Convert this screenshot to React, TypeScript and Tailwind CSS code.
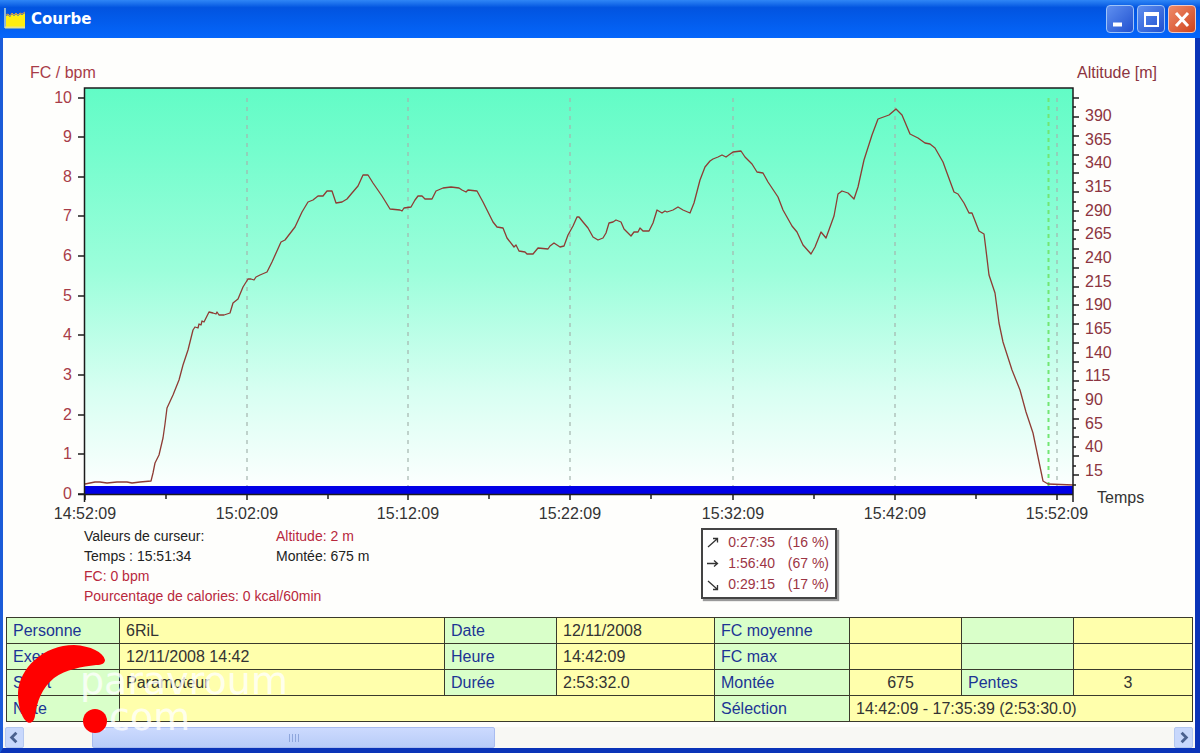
import React from 'react';

const FONT = "font-['Liberation_Sans',Arial,sans-serif]";

// Plot area in drawing units
const PLOT = { left: 85, right: 1073, top: 88, bottom: 494 };

const CURVE =
  '85,484 95,482 100,482 107,483 117,482 127,482 132,483 140,482 151,481 153,473 155,463 159,455 163,438 165,424 167,408 173,395 179,380 183,365 188,350 191,338 193,330 195,327 198,328 199,324 201,325 202,321 204,322 209,312 213,313 216,314 217,312 219,315 224,315 230,313 233,303 238,299 243,287 248,279 251,279 254,280 256,277 260,275 267,272 272,262 281,242 285,240 295,227 302,212 308,202 313,200 318,196 323,196 327,191 332,191 336,203 342,202 347,199 352,193 358,186 363,175 368,175 373,183 382,196 390,209 400,210 402,211 404,208 411,207 415,200 418,196 422,196 425,199 432,199 436,191 443,188 451,187 459,188 462,190 466,192 468,190 477,191 483,202 493,222 497,227 503,228 507,238 514,247 516,245 519,251 525,252 527,254 533,254 538,248 548,249 550,246 554,243 560,247 564,246 568,235 573,226 577,217 579,217 583,222 588,228 593,237 598,240 603,238 606,233 609,223 613,222 616,220 621,222 624,229 631,236 634,232 638,232 640,228 643,231 649,231 653,223 657,210 662,213 665,211 667,212 673,210 678,207 683,210 690,213 694,203 700,180 705,167 710,161 713,159 718,157 722,155 726,157 733,152 741,151 745,157 752,164 757,172 763,173 768,182 778,197 783,210 792,226 797,232 803,245 811,254 815,247 821,232 826,238 834,216 838,194 842,191 848,193 854,199 858,187 864,160 872,135 878,119 889,115 896,109 902,115 910,134 918,138 925,143 930,144 935,148 943,162 947,173 954,192 958,194 964,203 969,213 972,213 979,231 984,234 986,250 989,275 995,293 999,323 1003,342 1012,370 1020,390 1026,412 1033,433 1038,457 1043,481 1048,484 1073,485';

const timeTicks = [
  { x: 85, label: '14:52:09' },
  { x: 247, label: '15:02:09' },
  { x: 408, label: '15:12:09' },
  { x: 570, label: '15:22:09' },
  { x: 733, label: '15:32:09' },
  { x: 895, label: '15:42:09' },
  { x: 1057, label: '15:52:09' },
];

const bpmTicks = Array.from({ length: 11 }, (_, i) => ({ value: i, y: Math.round(494 - i * 39.65) }));
const altTicks = Array.from({ length: 42 }, (_, i) => ({ y: Math.round(98 + i * 9.43), long: i % 2 === 0 }));
const altLabels = Array.from({ length: 16 }, (_, i) => ({ value: 390 - i * 25, y: Math.round(116 + i * 23.67) }));

const CourbeChart = () => (
  <svg viewBox="3 38 1192 485" className={`block w-full ${FONT} text-[16px]`} role="img" aria-label="Courbe">
    <defs>
      <linearGradient id="sky" x1="0" y1="0" x2="0" y2="1">
        <stop offset="0" stopColor="#62fcc6" />
        <stop offset="0.15" stopColor="#74fdcd" />
        <stop offset="0.45" stopColor="#9cfedb" />
        <stop offset="0.75" stopColor="#d8fff2" />
        <stop offset="1" stopColor="#ffffff" />
      </linearGradient>
    </defs>

    <rect x={PLOT.left} y={PLOT.top} width={PLOT.right - PLOT.left} height={PLOT.bottom - PLOT.top} fill="url(#sky)" />

    {timeTicks.slice(1).map((t) => (
      <line key={t.x} x1={t.x} x2={t.x} y1="98" y2="486" stroke="#a4b4ae" strokeWidth="1.5" strokeOpacity="0.8" strokeDasharray="4 5" />
    ))}
    <line x1="1048.5" x2="1048.5" y1="98" y2="486" stroke="#72e673" strokeWidth="2" strokeDasharray="4 4" />

    <polyline points={CURVE} fill="none" stroke="#8e3c34" strokeWidth="1.3" strokeLinejoin="round" />
    <rect x={PLOT.left} y="486" width={PLOT.right - PLOT.left} height="8" fill="#0000e6" />

    <g stroke="#1c1c1c" strokeWidth="1.5">
      <path d="M84.5 502V88H1073V502" fill="none" />
      <line x1="78" x2="1073" y1="494.5" y2="494.5" />
      {bpmTicks.map((t) => (
        <line key={t.value} x1="78" x2="85" y1={t.y} y2={t.y} />
      ))}
      {altTicks.map((t) => (
        <line key={t.y} x1="1073" x2={t.long ? 1079 : 1076} y1={t.y} y2={t.y} />
      ))}
      {timeTicks.map((t) => (
        <line key={t.x} x1={t.x} x2={t.x} y1="494" y2="500" />
      ))}
      {timeTicks.slice(0, -1).map((t) => (
        <line key={t.x} x1={t.x + 81} x2={t.x + 81} y1="494" y2="499" />
      ))}
    </g>

    <g fill="#a83c48">
      <text x="30" y="78">FC / bpm</text>
      {bpmTicks.map((t) => (
        <text key={t.value} x="72" y={t.y + 5} textAnchor="end">{t.value}</text>
      ))}
    </g>
    <g fill="#8c3440">
      <text x="1077" y="78">Altitude [m]</text>
      {altLabels.map((t) => (
        <text key={t.value} x="1085" y={t.y + 5}>{t.value}</text>
      ))}
    </g>
    <g fill="#333333">
      {timeTicks.map((t) => (
        <text key={t.x} x={t.x} y="519" textAnchor="middle">{t.label}</text>
      ))}
      <text x="1097" y="503">Temps</text>
    </g>
  </svg>
);

const TitleBar = () => (
  <header className="flex h-[38px] items-center bg-linear-to-b from-[#2f86f6] via-[#0254e0] via-20% to-[#0566fb] px-1">
    <svg width="22" height="22" viewBox="0 0 22 22" aria-hidden="true">
      <path d="M1 0V20" stroke="#8fb8d8" strokeWidth="2" />
      <path d="M2 8L4 7 6 9 8 6 10 8 12 6 14 8 16 6 18 7 21 5V19H2Z" fill="#ffee10" />
      <path d="M2 7L4 6 6 8 8 5 10 7 12 5 14 7 16 5 18 6 21 4" stroke="#e79a3c" fill="none" />
      <path d="M1 19.500H21" stroke="#e6e48a" strokeWidth="2" />
    </svg>
    <h1 className="ml-[5px] flex-1 font-['DejaVu_Sans',Verdana,sans-serif] text-[15px] font-bold text-white">Courbe</h1>
    <div className="flex gap-[3px]">
      <button type="button" aria-label="Réduire" className="h-7 w-7 rounded border border-[#9fc4f8] bg-linear-to-br from-[#5f8ff0] to-[#2250cf]">
        <svg viewBox="0 0 26 26"><path d="M6 18.500H15" stroke="#fff" strokeWidth="4" /></svg>
      </button>
      <button type="button" aria-label="Agrandir" className="h-7 w-7 rounded border border-[#9fc4f8] bg-linear-to-br from-[#5f8ff0] to-[#2250cf]">
        <svg viewBox="0 0 26 26" fill="none" stroke="#fff">
          <path d="M7 7V20H20V7" strokeWidth="2" />
          <path d="M6 8H21" strokeWidth="4" />
        </svg>
      </button>
      <button type="button" aria-label="Fermer" className="h-7 w-7 rounded border border-[#f0c8c0] bg-linear-to-br from-[#ee8a68] to-[#cf4218]">
        <svg viewBox="0 0 26 26"><path d="M7 7L19 20M19 7L7 20" stroke="#fff" strokeWidth="3" /></svg>
      </button>
    </div>
  </header>
);

const slopes = [
  { name: 'Montée', time: '0:27:35', pct: '(16 %)', d: 'M1 11L10 3M6 2.500H10.500V6.500' },
  { name: 'Plat', time: '1:56:40', pct: '(67 %)', d: 'M0 6.500H10M7 3.500L10.500 6.500 7 9.500' },
  { name: 'Descente', time: '0:29:15', pct: '(17 %)', d: 'M1 3L10 11M10.500 7V11.500H6' },
];

const CursorValues = () => (
  <section className="grid h-[94px] grid-cols-[192px_425px_auto] items-start justify-start pl-[81px] pt-[3px] text-sm leading-5 whitespace-nowrap text-[#222]">
    <div>
      <p>Valeurs de curseur:</p>
      <p>Temps : 15:51:34</p>
      <p className="text-[#b8283c]">FC: 0 bpm</p>
      <p className="text-[#b8283c]">Pourcentage de calories: 0 kcal/60min</p>
    </div>
    <div>
      <p className="text-[#b8283c]">Altitude: 2 m</p>
      <p>Montée: 675 m</p>
    </div>
    <ul className="mt-[2px] border-2 border-[#444] bg-white px-1 py-[2px] leading-[21px] text-[#9c3444] shadow-[2px_2px_1px_#999]">
      {slopes.map((s) => (
        <li key={s.name} className="flex items-center">
          <svg width="12" height="14" viewBox="0 0 12 14" role="img" aria-label={s.name}>
            <path d={s.d} fill="none" stroke="#333" strokeWidth="1.3" />
          </svg>
          <span className="w-14 text-right">{s.time}</span>
          <span className="w-14 pr-[2px] text-right">{s.pct}</span>
        </li>
      ))}
    </ul>
  </section>
);

const Label = ({ children }: { children?: React.ReactNode }) => (
  <th scope="row" className="border border-[#3a3a2c] bg-[#d9ffc9] px-[6px] text-left font-normal text-[#1c3494]">
    {children}
  </th>
);

const Value = ({ children, span, center }: { children?: React.ReactNode; span?: number; center?: boolean }) => (
  <td colSpan={span} className={`border border-[#3a3a2c] bg-[#ffffac] pl-[6px] text-[#333] ${center ? 'pr-4 text-center' : 'pr-[6px]'}`}>
    {children}
  </td>
);

const InfoTable = () => (
  <div className="pr-[2px] pl-[3px]">
    <table className="w-full table-fixed border-collapse border border-[#3a3a2c] text-base leading-[25px]">
      <colgroup>
        <col className="w-[113px]" />
        <col />
        <col className="w-[112px]" />
        <col className="w-[158px]" />
        <col className="w-[135px]" />
        <col className="w-[112px]" />
        <col className="w-[112px]" />
        <col className="w-[119px]" />
      </colgroup>
      <tbody>
        <tr>
          <Label>Personne</Label>
          <Value>6RiL</Value>
          <Label>Date</Label>
          <Value>12/11/2008</Value>
          <Label>FC moyenne</Label>
          <Value />
          <Label />
          <Value />
        </tr>
        <tr>
          <Label>Exercice</Label>
          <Value>12/11/2008 14:42</Value>
          <Label>Heure</Label>
          <Value>14:42:09</Value>
          <Label>FC max</Label>
          <Value />
          <Label />
          <Value />
        </tr>
        <tr>
          <Label>Sport</Label>
          <Value>Paramoteur</Value>
          <Label>Durée</Label>
          <Value>2:53:32.0</Value>
          <Label>Montée</Label>
          <Value center>675</Value>
          <Label>Pentes</Label>
          <Value center>3</Value>
        </tr>
        <tr>
          <Label>Note</Label>
          <Value span={3} />
          <Label>Sélection</Label>
          <Value span={3}>14:42:09 - 17:35:39 (2:53:30.0)</Value>
        </tr>
      </tbody>
    </table>
  </div>
);

const ScrollBar = () => (
  <div className="mt-[5px] flex h-[21px] items-stretch bg-[#f8f8f4] pr-[2px] pl-[2px]">
    <button type="button" aria-label="Défiler à gauche" className="w-[19px] rounded-xs border border-[#b4c8f0] bg-[#c8d8fc]">
      <svg viewBox="0 0 18 20"><path d="M11 5L6 10 11 15" fill="none" stroke="#4a6190" strokeWidth="3" /></svg>
    </button>
    <div className="flex flex-1 pl-[68px]">
      <div className="flex w-[403px] items-center justify-center gap-[2px] rounded-xs border border-[#a8bcf0] bg-linear-to-b from-[#ccdafe] to-[#b8ccf8]">
        <span className="h-2 w-px bg-[#8ea6dc]" />
        <span className="h-2 w-px bg-[#8ea6dc]" />
        <span className="h-2 w-px bg-[#8ea6dc]" />
        <span className="h-2 w-px bg-[#8ea6dc]" />
      </div>
    </div>
    <button type="button" aria-label="Défiler à droite" className="w-[19px] rounded-xs border border-[#b4c8f0] bg-[#c8d8fc]">
      <svg viewBox="0 0 18 20"><path d="M7 5L12 10 7 15" fill="none" stroke="#4a6190" strokeWidth="3" /></svg>
    </button>
  </div>
);

// Site logo laid over the bottom left corner of the window
const Watermark = () => (
  <svg className="pointer-events-none absolute bottom-0 left-0" width="300" height="113" viewBox="0 640 300 113" role="img" aria-label="paravroum.com">
    <g fill="#ffffff" fillOpacity="0.8" className="font-['DejaVu_Sans',Verdana,sans-serif] text-[38px]">
      <text x="80" y="694">paravroum</text>
      <text x="97" y="730">.com</text>
    </g>
    <path d="M105 660C103 652 91 646 74 645C44 645 19 668 18 693C18 706 21 716 26 721C30 725 34 722 35 716C37 701 42 688 54 678C66 669 82 667 96 665C102 665 105 663 105 660Z" fill="#ff0000" />
    <circle cx="95" cy="721" r="12" fill="#ff0000" />
  </svg>
);

const App = () => (
  <div className={`relative flex min-h-screen flex-col bg-[#0a48cc] ${FONT}`}>
    <TitleBar />
    <main className="flex flex-1 flex-col border-r-[5px] border-b-[5px] border-l-[3px] border-t-0 border-r-[#0a34b8] border-b-[#0a34b8] border-l-[#1c5cd8] bg-[#fefefc]">
      <CourbeChart />
      <CursorValues />
      <InfoTable />
      <ScrollBar />
    </main>
    <Watermark />
  </div>
);

export default App;
